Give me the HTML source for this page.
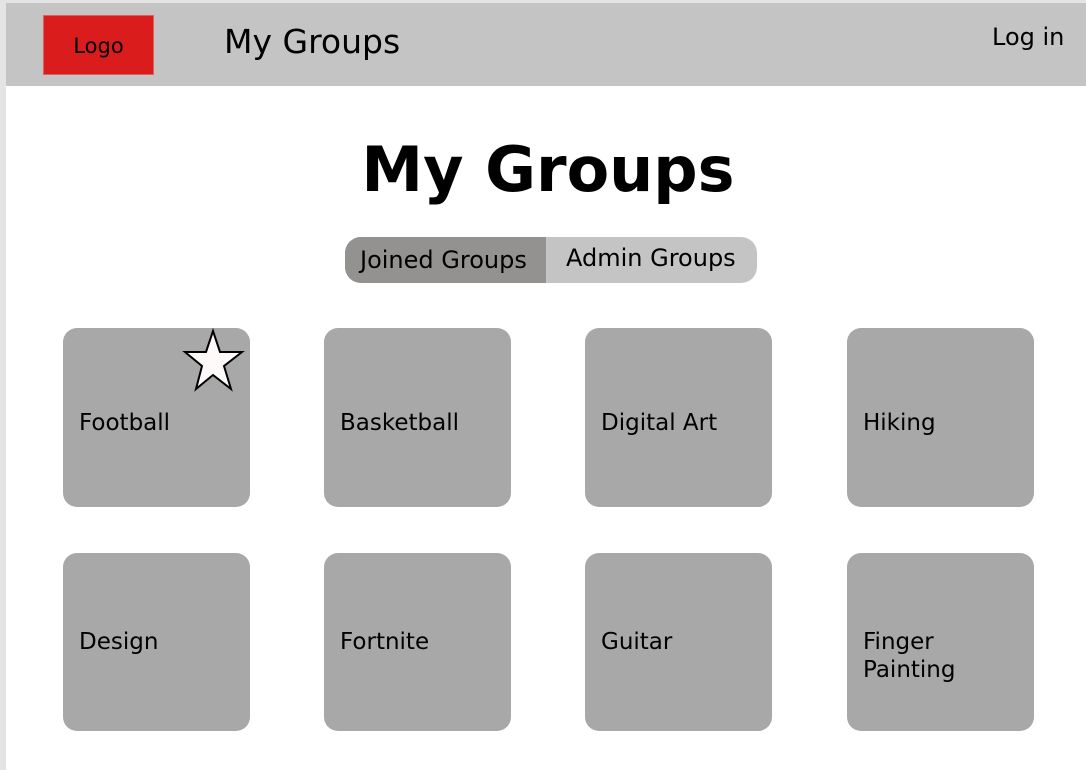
<!DOCTYPE html>
<html><head><style>
body{margin:0;width:1086px;height:770px;background:#fff;position:relative;overflow:hidden;font-family:"DejaVu Sans","Liberation Sans",sans-serif;}
.strip-l{position:absolute;left:0;top:0;width:6px;height:770px;background:#e4e4e4}
.strip-t{position:absolute;left:0;top:0;width:1086px;height:3px;background:#e4e4e4}
.hdr{position:absolute;left:6px;top:3px;width:1080px;height:83px;background:#c4c4c4}
.logo{position:absolute;left:43px;top:15px;width:111px;height:60px;background:#da1c1c;box-sizing:border-box;border:1px solid #e06060;font-size:21px;line-height:60px;text-align:center;color:#000}
.t{position:absolute;white-space:nowrap;color:#000}
.card{position:absolute;width:187px;height:179px;background:#a8a8a8;border-radius:14px}
.card span{position:absolute;left:16px;font-size:23px;line-height:28px}
</style></head><body>
<div class="strip-l"></div><div class="strip-t"></div>
<div class="hdr"></div>
<div class="logo">Logo</div>
<div class="t" style="left:224px;top:22px;font-size:33px;">My Groups</div>
<div class="t" style="left:992px;top:23px;font-size:24px;">Log in</div>
<div class="t" style="left:0;width:1096px;text-align:center;top:133px;font-size:62px;font-weight:bold;">My Groups</div>
<div style="position:absolute;left:345px;top:237px;width:412px;height:46px;border-radius:16px;overflow:hidden;background:#c4c4c4">
<div style="position:absolute;left:0;top:0;width:201px;height:46px;background:#939290"></div>
<div class="t" style="left:15px;top:9px;font-size:24px;">Joined Groups</div>
<div class="t" style="left:221px;top:7px;font-size:24px;">Admin Groups</div>
</div>
<div class="card" style="left:63px;top:328px"><span style="top:81px">Football</span></div>
<div class="card" style="left:324px;top:328px"><span style="top:81px">Basketball</span></div>
<div class="card" style="left:585px;top:328px"><span style="top:81px">Digital Art</span></div>
<div class="card" style="left:847px;top:328px"><span style="top:81px">Hiking</span></div>
<div class="card" style="left:63px;top:553px;height:178px"><span style="top:75px">Design</span></div>
<div class="card" style="left:324px;top:553px;height:178px"><span style="top:75px">Fortnite</span></div>
<div class="card" style="left:585px;top:553px;height:178px"><span style="top:75px">Guitar</span></div>
<div class="card" style="left:847px;top:553px;height:178px"><span style="top:75px">Finger<br>Painting</span></div>
<svg style="position:absolute;left:0;top:0" width="1086" height="770"><polygon points="213,331 220,352 242,352 224,366 231,389 213,375 196,389 202,366 185,352 206,352" fill="#fffafa" stroke="#000" stroke-width="2" stroke-linejoin="miter"/></svg>
</body></html>
